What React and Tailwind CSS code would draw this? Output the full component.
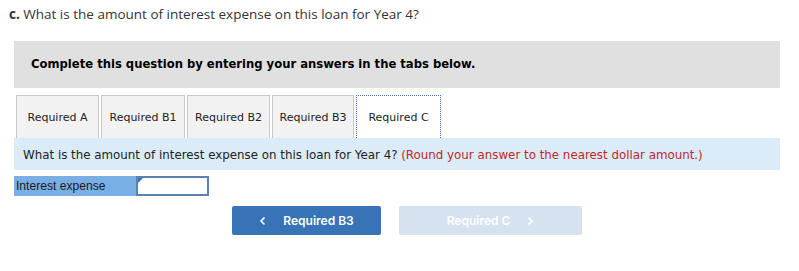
export default function App() {
  const tabs = [
    ["Required A", "w-[83px]"],
    ["Required B1", "w-[84px]"],
    ["Required B2", "w-[83px]"],
    ["Required B3", "w-[82px]"],
  ];
  return (
    <div className="w-[799px] h-[271px] bg-white relative overflow-hidden">
      <div className="pt-[5px] pl-[9px] text-[13.5px] text-[#333] leading-[18px]" style={{ fontFamily: '"Open Sans", sans-serif' }}>
        <span className="font-bold">c.</span> What is the amount of interest expense on this loan for Year 4?
      </div>
      <div className="mx-[14px] mt-[18px] w-[766px] h-[47px] bg-[#e0e0e0] flex items-center pl-[17px]">
        <span className="text-[11.6px] font-bold text-black" style={{ fontFamily: '"DejaVu Sans", Verdana, sans-serif' }}>
          Complete this question by entering your answers in the tabs below.
        </span>
      </div>
      <div className="flex ml-[16px] mt-[7px] gap-[2px] h-[43px]" style={{ fontFamily: '"DejaVu Sans", Verdana, sans-serif' }}>
        {tabs.map(([t, w]) => (
          <div key={t} className={`${w} h-[43px] bg-[#f2f2f2] border border-b-0 border-[#c8c8c8] flex items-center justify-center pt-[2px] text-[11px] text-[#222]`}>
            {t}
          </div>
        ))}
        <div className="h-[43px] w-[85px] bg-white border border-b-0 border-dotted border-[#3d6fb5] flex items-center justify-center pt-[2px] text-[11px] text-[#222]">
          Required C
        </div>
      </div>
      <div className="mx-[14px] w-[766px] h-[32px] bg-[#dbecf8] flex items-center pl-[9px] pt-[3px] text-[11.85px] text-[#222]" style={{ fontFamily: '"DejaVu Sans", Verdana, sans-serif' }}>
        What is the amount of interest expense on this loan for Year 4?&nbsp;<span className="text-[#c0272d]">(Round your answer to the nearest dollar amount.)</span>
      </div>
      <div className="flex ml-[14px] mt-[6px] h-[20px]">
        <div className="w-[122px] h-[20px] bg-[#7aafe6] flex items-center pl-[2px] text-[12.1px] text-[#1a1a1a]" style={{ fontFamily: '"Liberation Sans", Arial, sans-serif' }}>
          Interest expense
        </div>
        <div className="relative w-[73px] h-[20px] bg-white border-2 border-[#5a82b4]">
          <div className="absolute left-0 top-0 w-0 h-0 border-t-[5px] border-t-[#3873b8] border-r-[5px] border-r-transparent"></div>
        </div>
      </div>
      <div className="flex ml-[232px] mt-[10px] gap-[18px]" style={{ fontFamily: 'Inter, Roboto, sans-serif' }}>
        <div className="w-[149px] h-[29px] bg-[#3873b8] rounded-[2px] flex items-center justify-center text-white text-[12px] font-semibold gap-[16px]">
          <svg width="8" height="10" viewBox="0 0 8 10"><path d="M5.5 1.5 L2 5 L5.5 8.5" stroke="white" strokeWidth="1.6" fill="none" /></svg>
          <span>Required B3</span>
        </div>
        <div className="w-[183px] h-[29px] bg-[#d6e2f0] rounded-[2px] flex items-center justify-center text-white text-[12px] font-semibold gap-[16px]">
          <span>Required C</span>
          <svg width="8" height="10" viewBox="0 0 8 10"><path d="M2.5 1.5 L6 5 L2.5 8.5" stroke="white" strokeWidth="1.6" fill="none" /></svg>
        </div>
      </div>
    </div>
  );
}
